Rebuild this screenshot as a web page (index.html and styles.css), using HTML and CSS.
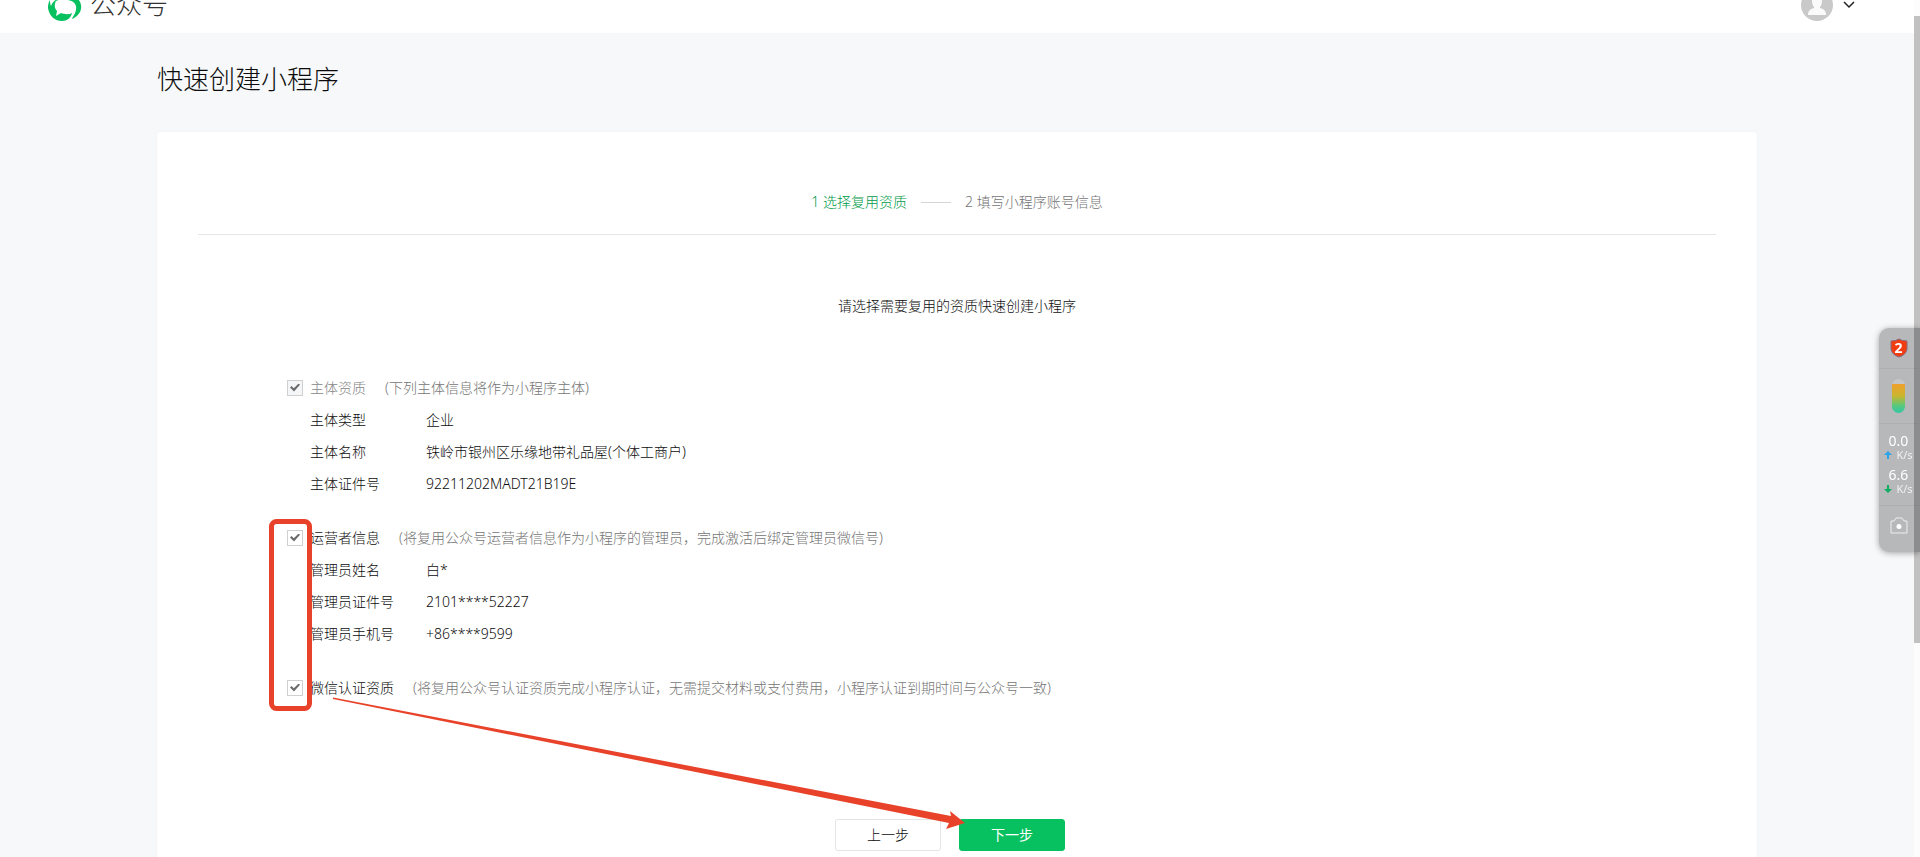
FILE: index.html
```html
<!DOCTYPE html>
<html lang="zh-CN">
<head>
<meta charset="utf-8">
<title>快速创建小程序</title>
<link rel="stylesheet" href="styles.css">
</head>
<body>
<header class="header">
  <a class="brand" href="#">
    <svg class="brand-logo" viewBox="0 0 34 34" aria-hidden="true">
      <path d="M2 13C0 16 0 19 0 21C1 28 6 34 14 34C19 34 23 31 24 26C21 28 16 27 13 26L8 29L9 24C6 21 6 17 9 12C6 14 4 16 3 19C2 17 2 15 2 13Z" fill="#07c160"/>
      <path d="M24 32C31 29 34 23 33 18C32 12 27 8 18 9L20 13C26 14 29 18 28 22C28 26 25 29 24 32Z" fill="#07c160"/>
      <path d="M4 11C10 3 18 4 24 8C18 7 12 10 9 14Z" fill="#07c160"/>
    </svg>
    <span class="brand-name">公众号</span>
  </a>
  <button class="account" type="button" aria-label="账号">
    <svg class="avatar" viewBox="0 0 32 32" aria-hidden="true">
      <circle cx="16" cy="16" r="16" fill="#c9c9c9"/>
      <path d="M11 12a5 5 0 0 1 10 0c0 3-1 5-2 6v1c4 1 6 3 6 7H7c0-4 2-6 6-7v-1c-1-1-2-3-2-6z" fill="#fafafa"/>
    </svg>
    <svg class="chevron" viewBox="0 0 12 8" aria-hidden="true"><path d="M1 1l5 5 5-5" fill="none" stroke="#222" stroke-width="1.5"/></svg>
  </button>
</header>

<main class="page">
  <h1 class="page-title">快速创建小程序</h1>
  <form class="card">
    <ol class="steps">
      <li class="step step-current">1 选择复用资质</li>
      <li class="step">2 填写小程序账号信息</li>
    </ol>
    <p class="intro">请选择需要复用的资质快速创建小程序</p>

    <div class="groups">
      <section class="group">
        <div class="group-head group-disabled">
          <input class="check" type="checkbox" id="subject" checked disabled>
          <label class="group-label" for="subject">主体资质</label>
          <span class="hint">(下列主体信息将作为小程序主体)</span>
        </div>
        <dl class="fields">
          <dt>主体类型</dt><dd>企业</dd>
          <dt>主体名称</dt><dd>铁岭市银州区乐缘地带礼品屋(个体工商户)</dd>
          <dt>主体证件号</dt><dd>92211202MADT21B19E</dd>
        </dl>
      </section>
      <section class="group">
        <div class="group-head">
          <input class="check" type="checkbox" id="operator" checked>
          <label class="group-label" for="operator">运营者信息</label>
          <span class="hint">(将复用公众号运营者信息作为小程序的管理员，完成激活后绑定管理员微信号)</span>
        </div>
        <dl class="fields">
          <dt>管理员姓名</dt><dd>白*</dd>
          <dt>管理员证件号</dt><dd>2101****52227</dd>
          <dt>管理员手机号</dt><dd>+86****9599</dd>
        </dl>
      </section>
      <section class="group">
        <div class="group-head">
          <input class="check" type="checkbox" id="verify" checked>
          <label class="group-label" for="verify">微信认证资质</label>
          <span class="hint">(将复用公众号认证资质完成小程序认证，无需提交材料或支付费用，小程序认证到期时间与公众号一致)</span>
        </div>
      </section>
    </div>

    <div class="actions">
      <button class="btn" type="button">上一步</button>
      <button class="btn btn-primary" type="submit">下一步</button>
    </div>

    <svg class="marks" viewBox="0 0 840 725" aria-hidden="true">
      <rect x="114.500" y="389.500" width="38" height="187" rx="5" fill="none" stroke="#e8432a" stroke-width="5"/>
      <path d="M176 565.500L794 684L793 679L808 691L789 697L792 691L176 567Z" fill="#e8432a"/>
    </svg>
  </form>
</main>

<div class="scroll-track"></div>
<aside class="monitor">
  <div class="cell cell-shield">
    <svg viewBox="0 0 18 20" width="18" height="20" aria-hidden="true"><path d="M9 1Q12 3 17 3V11Q16 17 9 19Q2 17 1 11V3Q6 3 9 1Z" fill="#f23c12" stroke="#8c6a7c"/></svg>
    <b class="count">2</b>
  </div>
  <div class="cell cell-gauge"><span class="gauge"></span></div>
  <div class="cell cell-speed">
    <span class="rate">0.0</span>
    <span class="unit"><svg viewBox="0 0 8 8" width="8" height="8" aria-hidden="true"><path d="M4 0L8 4H5V8H3V4H0Z" fill="#2aa3e8"/></svg>K/s</span>
    <span class="rate">6.6</span>
    <span class="unit"><svg viewBox="0 0 8 8" width="8" height="8" aria-hidden="true"><path d="M4 8L0 4H3V0H5V4H8Z" fill="#0fae62"/></svg>K/s</span>
  </div>
  <div class="cell cell-camera">
    <svg viewBox="0 0 18 17" width="18" height="17" aria-hidden="true"><path d="M1 4H4L6 1H12L14 4H17V16H1Z" fill="none" stroke="#eee" stroke-linejoin="round"/><circle cx="9" cy="9.500" r="2.500" fill="#fff"/></svg>
  </div>
</aside>
<div class="scroll-thumb"></div>
</body>
</html>
```
FILE: styles.css
```css
* { box-sizing: border-box; }

body {
  margin: 0;
  height: 100vh;
  padding-right: 6px;
  overflow: hidden;
  display: flex;
  flex-direction: column;
  background: #f6f8fa;
  color: #0c0c0c;
  font: 300 14px/22px "Noto Sans", "Noto Sans CJK SC", sans-serif;
}

button { font: inherit; cursor: pointer; }

/* header, scrolled partly out of view */
.header {
  flex: none;
  height: 33px;
  padding: 0 59px 12px 48px;
  display: flex;
  justify-content: space-between;
  align-items: flex-end;
  overflow: hidden;
  background: #fff;
}
.brand {
  display: flex;
  align-items: center;
  gap: 8px;
  color: #333;
  text-decoration: none;
}
.brand-logo { width: 34px; height: 34px; }
.brand-name { font-size: 26px; line-height: 34px; }
.account {
  display: flex;
  align-items: center;
  gap: 10px;
  padding: 0;
  border: 0;
  background: none;
}
.avatar { width: 32px; height: 32px; }
.chevron { width: 12px; height: 8px; }

.page {
  flex: 1;
  width: 100%;
  max-width: 1600px;
  margin: 0 auto;
  display: flex;
  flex-direction: column;
}
.page-title {
  margin: 0;
  padding: 26px 0 33px;
  font-size: 26px;
  line-height: 40px;
  font-weight: 300;
}

.card {
  position: relative;
  flex: 1 0 auto;
  padding: 55px 41px 0;
  background: #fff;
  box-shadow: 0 0 2px #ecedef;
  border-radius: 3px 3px 0 0;
}

.steps {
  margin: 0;
  padding: 4px 0 21px;
  display: flex;
  justify-content: center;
  list-style: none;
  border-bottom: 1px solid #e4e5e7;
}
.step { display: flex; align-items: center; color: #757575; }
.step + .step::before {
  content: "";
  width: 30px;
  margin: 0 14px;
  border-top: 1px solid #d4d4d4;
}
.step-current { color: #009a48; }

.intro { margin: 60px 0 54px; text-align: center; }

.groups {
  padding-left: 89px;
  display: grid;
  gap: 21px;
}
.group-head {
  height: 33px;
  display: flex;
  align-items: center;
}
.check {
  appearance: none;
  width: 16px;
  height: 16px;
  margin: 0 7px 0 0;
  display: grid;
  place-items: center;
  background: #fff;
  border: 1px solid #d0d0d0;
}
.check:checked::before {
  content: "";
  width: 10px;
  height: 8px;
  background: #6b6b6b;
  clip-path: polygon(0 50%, 15% 32%, 38% 60%, 86% 0, 100% 16%, 40% 100%);
}
.check:disabled { background: #f5f6f8; }
.hint { margin-left: 19px; color: #757575; }
.group-disabled .group-label { color: #868686; }

.fields {
  margin: 0;
  padding-left: 23px;
  display: grid;
  grid-template-columns: 116px 1fr;
  line-height: 32px;
}
.fields dd { margin: 0; }

.actions {
  padding-top: 115px;
  display: flex;
  justify-content: center;
  gap: 4px;
}
.btn {
  width: 106px;
  height: 32px;
  margin-right: 14px;
  padding: 0;
  border: 1px solid #e4e4e4;
  border-radius: 3px;
  background: #fff;
  color: #0c0c0c;
}
.btn-primary {
  border-color: #07c160;
  background: #07c160;
  color: #fff;
  font-weight: 400;
}

/* highlight frame and arrow drawn over the form */
.marks {
  position: absolute;
  left: 0;
  top: 0;
  width: 840px;
  height: 725px;
  pointer-events: none;
}

/* floating system monitor */
.monitor {
  position: fixed;
  right: 0;
  top: 328px;
  width: 41px;
  padding-right: 2px;
  border-radius: 10px 0 0 10px;
  background: #b6b8ba;
  box-shadow: 0 1px 6px rgba(0, 0, 0, .35);
  color: #fff;
  font-weight: 400;
}
.cell {
  position: relative;
  display: flex;
  flex-direction: column;
  align-items: center;
  justify-content: center;
}
.cell + .cell { border-top: 1px solid #acaeb0; }
.cell-shield { height: 40px; }
.count { position: absolute; font-size: 14px; line-height: 20px; }
.cell-gauge { height: 55px; }
.gauge {
  width: 13px;
  height: 34px;
  border-radius: 7px;
  background: linear-gradient(#c4c6c8 0 16%, #efa02c 16%, #c9b62f 50%, #52c980 80%, #35c5a5);
}
.cell-speed { height: 82px; padding-top: 2px; }
.rate { font-size: 14px; line-height: 18px; }
.unit {
  display: flex;
  align-items: center;
  gap: 4px;
  margin-bottom: 6px;
  font-size: 11px;
  line-height: 10px;
  color: #f0f0f0;
}
.cell-camera { height: 47px; padding-bottom: 8px; }

/* scroll bar; the thumb is translucent and lies over the monitor */
.scroll-track {
  position: fixed;
  right: 0;
  top: 0;
  bottom: 0;
  width: 6px;
  background: #fcfcfd;
}
.scroll-thumb {
  position: fixed;
  right: 0;
  top: 16px;
  width: 6px;
  height: 627px;
  background: rgba(0, 0, 0, .23);
}
```
